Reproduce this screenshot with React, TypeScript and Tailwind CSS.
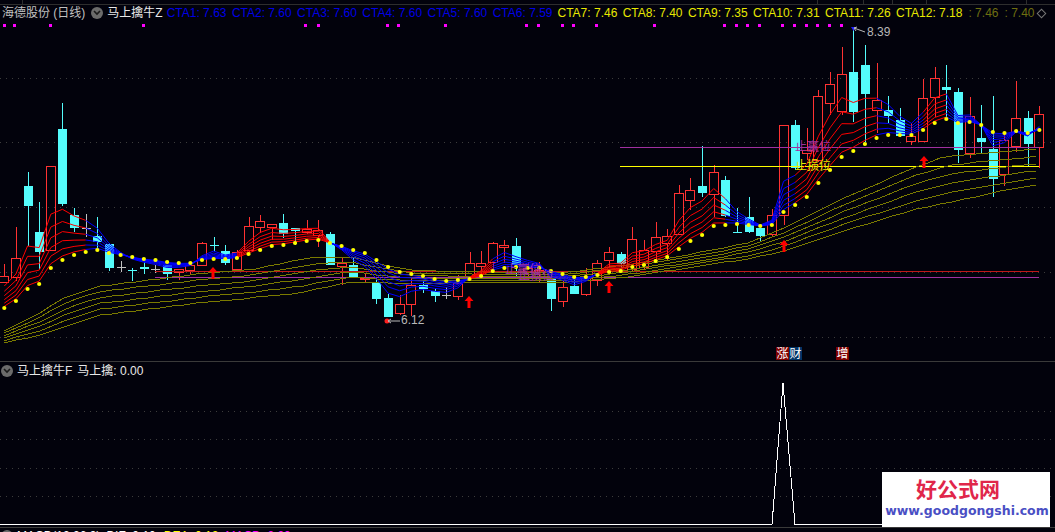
import React from "react";

// body top, body bottom, wick top, wick bottom (page px), colour
type C = [number, number, number, number, "r" | "c" | "g"];

const candles: C[] = [
  [276, 282, 264, 282, "r"], [258, 277, 227, 281, "r"], [186, 206, 172, 246, "c"], [232, 252, 202, 269, "c"],
  [166, 250, 166, 250, "r"], [129, 204, 103, 206, "c"], [215, 228, 208, 232, "c"], [228, 229, 214, 237, "g"],
  [236, 242, 217, 250, "c"], [244, 268, 243, 271, "c"], [267, 268, 261, 272, "g"], [270, 271, 268, 281, "c"],
  [267, 269, 262, 274, "c"], [269, 270, 265, 273, "g"], [265, 274, 265, 280, "c"], [269, 272, 269, 280, "r"],
  [265, 270, 265, 274, "r"], [243, 265, 242, 265, "r"], [245, 246, 237, 251, "c"], [251, 263, 245, 265, "c"],
  [252, 269, 250, 270, "r"], [226, 250, 217, 255, "r"], [221, 227, 215, 233, "r"], [224, 227, 224, 240, "r"],
  [223, 234, 214, 238, "c"], [228, 231, 228, 245, "c"], [229, 232, 220, 234, "r"], [230, 235, 220, 247, "r"],
  [234, 265, 232, 265, "c"], [263, 266, 258, 285, "r"], [265, 277, 257, 277, "c"], [278, 279, 273, 282, "r"],
  [283, 299, 278, 304, "c"], [298, 317, 294, 317, "c"], [304, 313, 295, 315, "r"], [285, 304, 277, 316, "r"],
  [285, 289, 280, 293, "c"], [291, 296, 288, 302, "c"], [295, 296, 287, 299, "g"], [283, 296, 275, 300, "r"],
  [263, 277, 252, 278, "r"], [263, 266, 251, 277, "r"], [243, 262, 242, 272, "r"], [245, 247, 240, 263, "r"],
  [246, 265, 238, 277, "c"], [268, 272, 262, 280, "r"], [270, 274, 262, 282, "r"], [278, 299, 270, 311, "c"],
  [287, 301, 280, 307, "r"], [286, 294, 280, 294, "c"], [278, 294, 268, 296, "r"], [263, 280, 260, 286, "r"],
  [252, 260, 247, 268, "r"], [254, 264, 252, 272, "c"], [239, 269, 227, 272, "r"], [250, 267, 240, 270, "r"],
  [237, 251, 222, 263, "r"], [236, 243, 229, 260, "r"], [193, 234, 185, 234, "r"], [190, 200, 178, 210, "r"],
  [186, 193, 146, 197, "c"], [172, 194, 165, 217, "r"], [180, 216, 176, 217, "c"], [232, 233, 208, 233, "c"],
  [217, 232, 197, 233, "c"], [228, 236, 228, 241, "c"], [215, 234, 209, 237, "r"], [125, 215, 125, 225, "r"],
  [125, 168, 120, 170, "c"], [150, 153, 128, 160, "r"], [96, 160, 90, 162, "r"], [84, 103, 72, 115, "r"],
  [74, 111, 47, 115, "r"], [72, 112, 28, 122, "c"], [65, 94, 45, 142, "c"], [100, 110, 63, 133, "r"],
  [110, 116, 96, 123, "c"], [120, 136, 108, 137, "c"], [136, 141, 123, 145, "r"], [98, 141, 79, 141, "r"],
  [78, 97, 67, 117, "r"], [87, 90, 65, 117, "c"], [92, 150, 88, 163, "c"], [116, 153, 97, 158, "r"],
  [138, 142, 105, 153, "c"], [149, 179, 96, 197, "c"], [140, 174, 133, 186, "r"], [118, 146, 81, 152, "r"],
  [118, 144, 111, 166, "c"], [114, 147, 106, 168, "r"],
];

const dots = [
  308, 301, 289, 284, 268, 260, 255, 252, 250, 253, 255, 257, 259, 260, 262, 263, 263, 260, 259, 259, 258, 254, 250,
  246, 245, 243, 241, 240, 243, 246, 250, 253, 260, 267, 272, 274, 276, 279, 281, 280, 279, 276, 271, 268, 267, 268,
  268, 271, 274, 277, 277, 275, 272, 271, 267, 265, 261, 257, 249, 241, 235, 226, 225, 224, 225, 226, 225, 212, 205,
  197, 183, 170, 157, 151, 144, 138, 135, 135, 135, 130, 123, 119, 123, 122, 125, 132, 133, 131, 133, 130,
];

const cx = (i: number) => 4.3 + 11.63 * i;

const closes = candles.map((c) => (c[4] === "r" ? c[0] : c[1]));
const fast: number[] = [];
closes.forEach((v, i) => fast.push(i === 0 ? 288 : fast[i - 1] + (v - fast[i - 1]) * 0.4));

const weights = [1, 0.76, 0.56, 0.38, 0.22, 0.08];
const blueRanges = [[7, 20], [28, 40], [42, 51], [62, 68], [75, 79], [81, 89]];
const isBlue = (i: number) => blueRanges.some(([a, b]) => i > a && i <= b);

function lerp(pts: number[][], x: number) {
  for (let i = 1; i < pts.length; i++) {
    if (x <= pts[i][0]) {
      const t = (x - pts[i - 1][0]) / (pts[i][0] - pts[i - 1][0]);
      return pts[i - 1][1] + (pts[i][1] - pts[i - 1][1]) * t;
    }
  }
  return pts[pts.length - 1][1];
}

const bandTop = [
  [4, 331], [30, 318], [42, 312], [60, 300], [80, 292], [100, 286], [150, 280], [200, 274], [250, 270], [283, 263],
  [317, 257], [350, 257], [407, 270], [507, 272], [570, 272], [627, 265], [687, 255], [747, 243], [780, 230],
  [847, 197], [913, 168], [947, 156], [1038, 149],
];
const bandBottom = [
  [4, 343], [40, 335], [60, 328], [100, 315], [200, 303], [300, 293], [350, 282], [407, 283], [507, 282], [570, 282],
  [627, 277], [687, 268], [747, 259], [780, 252], [847, 230], [913, 210], [997, 192], [1038, 185],
];

const xTop = [4, 14, 50, 143, 305, 318, 387, 398, 445, 526, 538, 562, 573, 596, 654, 724, 736, 747, 759, 782, 794, 806, 817, 829, 841];

const arrows = [[213, 267], [469, 296], [609, 281], [784, 240], [924, 156]];

const ctaBlue = ["CTA1: 7.63", "CTA2: 7.60", "CTA3: 7.60", "CTA4: 7.60", "CTA5: 7.60", "CTA6: 7.59"];
const ctaYellow = ["CTA7: 7.46", "CTA8: 7.40", "CTA9: 7.35", "CTA10: 7.31", "CTA11: 7.26", "CTA12: 7.18"];

function Toggle() {
  return (
    <span className="flex h-[12px] w-[12px] shrink-0 items-center justify-center rounded-full bg-[#6b6b6b]">
      <svg width="8" height="6" viewBox="0 0 8 6" fill="none" stroke="#1a1a1a" strokeWidth="1.6">
        <path d="M1 1l3 3 3-3" />
      </svg>
    </span>
  );
}

function PriceChart() {
  return (
    <svg width="1055" height="361" className="block" shapeRendering="crispEdges">
      {[78, 142, 207, 272, 337].map((y) => (
        <line key={y} x1="0" x2="1055" y1={y + 0.5} y2={y + 0.5} stroke="#3c3c3c" strokeDasharray="1 5" />
      ))}
      <line x1="0" x2="1055" y1="4.5" y2="4.5" stroke="#2e2e2e" />
      {[22, 817, 863, 892, 926, 1026].map((x) => (
        <line key={x} x1={x + 0.5} x2={x + 0.5} y1="0" y2="4" stroke="#2e2e2e" />
      ))}
      {xTop.map((x) => (
        <rect key={x} x={x - 1} y={24} width="3" height="3" fill="#ff00ff" />
      ))}

      {candles.map((c, i) => {
        const x = Math.round(cx(i));
        const color = c[4] === "r" ? "#ff3232" : c[4] === "c" ? "#54fcfc" : "#c0c0c0";
        const h = Math.max(c[1] - c[0], 1);
        return (
          <g key={i}>
            <line x1={x + 0.5} x2={x + 0.5} y1={c[2]} y2={c[0]} stroke={color} />
            <line x1={x + 0.5} x2={x + 0.5} y1={c[0] + h} y2={c[3]} stroke={color} />
            {c[4] === "r" ? (
              <rect x={x - 4.5} y={c[0] + 0.5} width="9" height={h} fill="none" stroke={color} />
            ) : (
              <rect x={x - 4} y={c[0]} width="9" height={h} fill={color} />
            )}
          </g>
        );
      })}

      <line x1="155" x2="1039" y1="271.5" y2="271.5" stroke="#c01818" />
      <line x1="155" x2="1039" y1="277.5" y2="277.5" stroke="#a030a0" />
      <line x1="620" x2="1039" y1="147.5" y2="147.5" stroke="#a030a0" />
      <line x1="620" x2="1039" y1="166.5" y2="166.5" stroke="#ffff00" />

      {[0, 0.2, 0.4, 0.6, 0.8, 1].map((t) => {
        const pts: string[] = [];
        for (let x = 4; x <= 1038; x += 12) {
          const y = lerp(bandTop, x) + (lerp(bandBottom, x) - lerp(bandTop, x)) * t;
          pts.push(`${x},${Math.round(y)}`);
        }
        return <polyline key={t} points={pts.join(" ")} fill="none" stroke="#7a7a00" />;
      })}

      {weights.map((w) =>
        dots.slice(1).map((d, n) => {
          const i = n + 1;
          const y1 = dots[i - 1] + (fast[i - 1] - dots[i - 1]) * w - 2 * w;
          const y2 = d + (fast[i] - d) * w - 2 * w;
          return (
            <line
              key={`${w}-${i}`}
              x1={cx(i - 1)}
              x2={cx(i)}
              y1={y1}
              y2={y2}
              stroke={isBlue(i) ? "#0000ff" : "#ff0000"}
              shapeRendering="auto"
            />
          );
        }),
      )}

      {dots.map((d, i) => (
        <circle key={i} cx={cx(i)} cy={d} r="2.1" fill="#ffff00" shapeRendering="auto" />
      ))}

      {arrows.map(([x, y]) => (
        <path key={x} d={`M${x} ${y}l4.5 5h-3v7h-3v-7h-3z`} fill="#ff0000" shapeRendering="auto" />
      ))}

      <g shapeRendering="auto">
        <path d="M851 27h5l-2.500 4z" fill="#2020ff" />
        <path d="M865 32L854 28M854 28l3 -1M854 28l2 3" stroke="#b8b8b8" fill="none" />
        <circle cx="387" cy="321" r="2.500" fill="#ff2020" />
        <path d="M400 321H388M388 321l3 -2M388 321l3 2" stroke="#b8b8b8" fill="none" />
      </g>
    </svg>
  );
}

function IndicatorChart() {
  return (
    <svg width="1055" height="170" className="block" shapeRendering="crispEdges">
      {[49, 77, 106, 134].map((y) => (
        <line key={y} x1="0" x2="1055" y1={y + 0.5} y2={y + 0.5} stroke="#3c3c3c" strokeDasharray="1 5" />
      ))}
      <polyline points="0,162.500 772,162.500 783,21 795,162.500 882,162.500" fill="none" stroke="#ffffff" />
      <line x1="0" x2="1055" y1="165.500" y2="165.500" stroke="#3a3a3a" />
    </svg>
  );
}

export default function App() {
  return (
    <div className="relative h-[532px] w-[1055px] overflow-hidden bg-[#02020c] font-['Liberation_Sans','Noto_Sans_CJK_SC',sans-serif] text-[12px] leading-none">
      <div className="relative h-[361px]">
        <PriceChart />

        <div className="absolute top-[7px] left-[2px] flex items-center whitespace-nowrap">
          <span className="mr-[6px] text-[#c0c0c0]">海德股份 (日线)</span>
          <Toggle />
          <span className="mr-[4px] ml-[4px] text-[#e8e8e8]">马上擒牛Z</span>
          <div className="flex gap-[5.4px] text-[#0000e6]">
            {ctaBlue.map((t) => (
              <span key={t}>{t}</span>
            ))}
          </div>
          <div className="ml-[5px] flex gap-[5.4px] text-[#e8e800]">
            {ctaYellow.map((t) => (
              <span key={t}>{t}</span>
            ))}
          </div>
          <span className="ml-[6px] text-[#6e6e10]">: 7.46</span>
          <span className="ml-[6px] text-[#6e6e10]">: 7.40</span>
          <span className="ml-[3px] h-[7px] w-[7px] shrink-0 rotate-45 border border-[#777]" />
        </div>

        <span className="absolute top-[26px] left-[867px] text-[#b8b8b8]">8.39</span>
        <span className="absolute top-[314px] left-[401px] text-[#b8b8b8]">6.12</span>

        <span className="absolute top-[141px] left-[795px] text-[#a030a0]">止赢位</span>
        <span className="absolute top-[160px] left-[795px] text-[#e8e800]">止损位</span>
        <span className="absolute top-[264px] left-[505px] text-[#a030a0]">止赢位</span>
        <span className="absolute top-[270px] left-[518px] text-[#a030a0]">止损位</span>

        <div className="absolute top-[347px] left-[776px] flex">
          <span className="bg-[#800000] px-[0.5px] py-[0.5px] text-white">涨</span>
          <span className="bg-[#003366] px-[0.5px] py-[0.5px] text-white">财</span>
          <span className="ml-[34px] bg-[#800000] px-[0.5px] py-[0.5px] text-white">增</span>
        </div>
      </div>

      <div className="relative border-t border-[#3a3a3a]">
        <IndicatorChart />
        <div className="absolute top-[3px] left-[1px] flex items-center whitespace-nowrap text-[#e8e8e8]">
          <Toggle />
          <span className="ml-[4px]">马上擒牛F</span>
          <span className="ml-[5px]">马上擒: 0.00</span>
        </div>
      </div>

      <div className="absolute top-[530px] left-[1px] flex items-center whitespace-nowrap">
        <Toggle />
        <span className="ml-[4px] text-white">MACD(12,26,9)</span>
        <span className="ml-[6px] text-white">DIF: 0.10</span>
        <span className="ml-[8px] text-[#ffff00]">DEA: 0.12</span>
        <span className="ml-[7px] text-[#ff00ff]">MACD: 0.00</span>
      </div>

      <div className="absolute top-[472px] left-[882px] flex h-[55px] w-[168px] flex-col items-center bg-white pt-[6px]">
        <span className="mr-[16px] text-[21px] leading-[24px] font-bold text-[#e0264a]">好公式网</span>
        <span className="mt-[1px] ml-[2px] font-['DejaVu_Sans',sans-serif] text-[12.5px] leading-[16px] font-bold text-[#4a4fc4]">
          www.goodgongshi.com
        </span>
      </div>
    </div>
  );
}
